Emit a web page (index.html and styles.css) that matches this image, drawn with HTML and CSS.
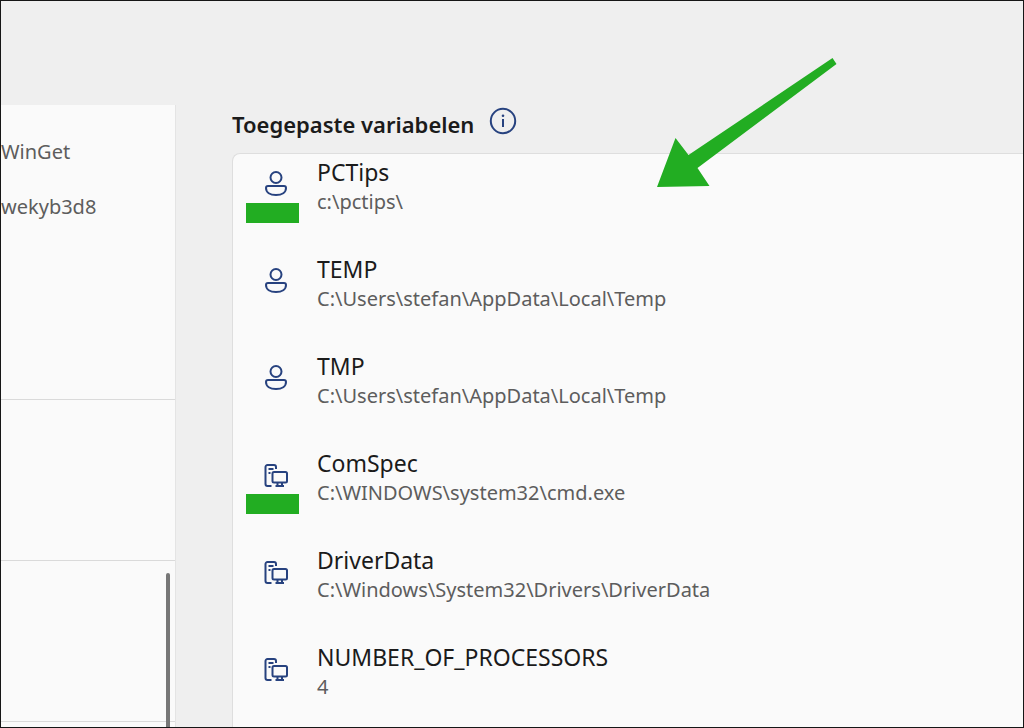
FILE: index.html
```html
<!DOCTYPE html>
<html lang="nl">
<head>
    <meta charset="UTF-8">
    <meta name="viewport" content="width=device-width, initial-scale=1.0">
    <title>Toegepaste variabelen</title>
    <link rel="stylesheet" href="styles.css">
</head>
<body>
    <svg class="symbols" aria-hidden="true">
        <symbol id="user" viewBox="0 0 24 28">
            <circle cx="12" cy="8.500" r="5.500" />
            <path d="M4 17h16a2 2 0 0 1 2 2c0 4.300-4 7-10 7s-10-2.700-10-7a2 2 0 0 1 2-2z" />
        </symbol>
        <symbol id="computer" viewBox="0 0 24 24">
            <path d="M7.500 22H3.500a2 2 0 0 1-2-2V3a2 2 0 0 1 2-2h6.500a2 2 0 0 1 2 2V5" />
            <path d="M4.500 5h5M4.500 9h2" />
            <rect x="8.500" y="8" width="14.500" height="10.500" rx="1.500" />
            <path d="M13.500 18.500V22M18 18.500V22M11.500 22h8.500" />
        </symbol>
    </svg>

    <div class="window">
        <aside class="sidebar">
            <section class="side-section side-section-large">
                <p>WinGet</p>
                <p>wekyb3d8</p>
            </section>
            <section class="side-section"></section>
            <section class="side-section"><div class="scroll-thumb"></div></section>
            <section class="side-section"></section>
        </aside>

        <main class="content">
            <header class="heading">
                <h1>Toegepaste variabelen</h1>
                <button class="info" type="button" aria-label="Informatie">
                    <svg viewBox="0 0 28 28" aria-hidden="true">
                        <circle cx="14" cy="14" r="12.200" />
                        <path d="M14 12v8" />
                        <circle class="dot" cx="14" cy="8.700" r="1.300" />
                    </svg>
                </button>
            </header>

            <ul class="variables">
                <li class="variable marked">
                    <svg class="icon user"><use href="#user" /></svg>
                    <div>
                        <h2>PCTips</h2>
                        <p>c:\pctips\</p>
                    </div>
                </li>
                <li class="variable">
                    <svg class="icon user"><use href="#user" /></svg>
                    <div>
                        <h2>TEMP</h2>
                        <p>C:\Users\stefan\AppData\Local\Temp</p>
                    </div>
                </li>
                <li class="variable">
                    <svg class="icon user"><use href="#user" /></svg>
                    <div>
                        <h2>TMP</h2>
                        <p>C:\Users\stefan\AppData\Local\Temp</p>
                    </div>
                </li>
                <li class="variable marked">
                    <svg class="icon"><use href="#computer" /></svg>
                    <div>
                        <h2>ComSpec</h2>
                        <p>C:\WINDOWS\system32\cmd.exe</p>
                    </div>
                </li>
                <li class="variable">
                    <svg class="icon"><use href="#computer" /></svg>
                    <div>
                        <h2>DriverData</h2>
                        <p>C:\Windows\System32\Drivers\DriverData</p>
                    </div>
                </li>
                <li class="variable">
                    <svg class="icon"><use href="#computer" /></svg>
                    <div>
                        <h2>NUMBER_OF_PROCESSORS</h2>
                        <p>4</p>
                    </div>
                </li>
            </ul>

            <svg class="arrow" viewBox="0 0 180 131" aria-hidden="true">
                <path d="M175.500 1L31.500 98L18.500 81L0 130L52.500 129L40.500 111L179.500 7z" />
            </svg>
        </main>
    </div>
</body>
</html>
```

FILE: styles.css
```css
* {
    box-sizing: border-box;
}
body {
    margin: 0;
    font-family: "Noto Sans", sans-serif;
    color: #1b1b1b;
    background: #efefef;
}
h1, h2, p, ul {
    margin: 0;
    padding: 0;
}
svg {
    fill: none;
    stroke: #27427f;
    stroke-width: 2;
}
.symbols {
    display: none;
}
.window {
    display: flex;
    height: 100vh;
    overflow: hidden;
    border: 1px solid #161616;
}

/* left panel */
.sidebar {
    flex: none;
    width: 175px;
    margin-top: 104px;
    background: #fafafa;
    border-right: 1px solid #e4e4e4;
    overflow: hidden;
}
.side-section {
    display: flex;
    justify-content: flex-end;
    height: 161px;
    padding: 12px 5px 0;
    border-bottom: 1px solid #dadada;
}
.side-section-large {
    flex-direction: column;
    justify-content: flex-start;
    gap: 25px;
    height: 295px;
    padding: 32px 0 0;
}
.side-section p {
    font-size: 20px;
    line-height: 30px;
    color: #5d5d5d;
}
.scroll-thumb {
    width: 4px;
    height: 200px;
    border-radius: 2px;
    background: #777;
}

/* variables */
.content {
    position: relative;
    flex: 1;
    display: flex;
    flex-direction: column;
    padding: 104px 0 0 56px;
}
.heading {
    display: flex;
    align-items: flex-start;
    gap: 15px;
    height: 32px;
    margin-bottom: 16px;
}
h1 {
    font-size: 22px;
    font-weight: 600;
    line-height: 38px;
}
.info {
    width: 28px;
    height: 28px;
    margin-top: 2px;
    padding: 0;
    border: none;
    background: none;
    cursor: pointer;
}
.info svg {
    display: block;
    width: 28px;
    height: 28px;
}
.info .dot {
    fill: #27427f;
    stroke: none;
}
.variables {
    flex: 1;
    display: flex;
    flex-direction: column;
    gap: 37px;
    padding: 3px 0 0 31px;
    list-style: none;
    background: #fafafa;
    border: 1px solid #dedede;
    border-right: none;
    border-bottom: none;
    border-radius: 8px 0 0 0;
}
.variable {
    position: relative;
    display: flex;
    align-items: center;
    gap: 29px;
    height: 60px;
}
.icon {
    flex: none;
    width: 24px;
    height: 24px;
    margin-bottom: 4px;
}
.icon.user {
    height: 28px;
    margin-bottom: 8px;
}
.variable h2 {
    font-size: 23px;
    font-weight: 400;
    line-height: 30px;
}
.variable p {
    font-size: 20px;
    line-height: 30px;
    color: #5d5d5d;
}

/* green highlights */
.marked::after {
    content: "";
    position: absolute;
    left: -18px;
    top: 46px;
    width: 53px;
    height: 20px;
    background: #22ad22;
}
.arrow {
    position: absolute;
    left: 481px;
    top: 56px;
    width: 180px;
    height: 131px;
    fill: #22ad22;
    stroke: none;
}
```
